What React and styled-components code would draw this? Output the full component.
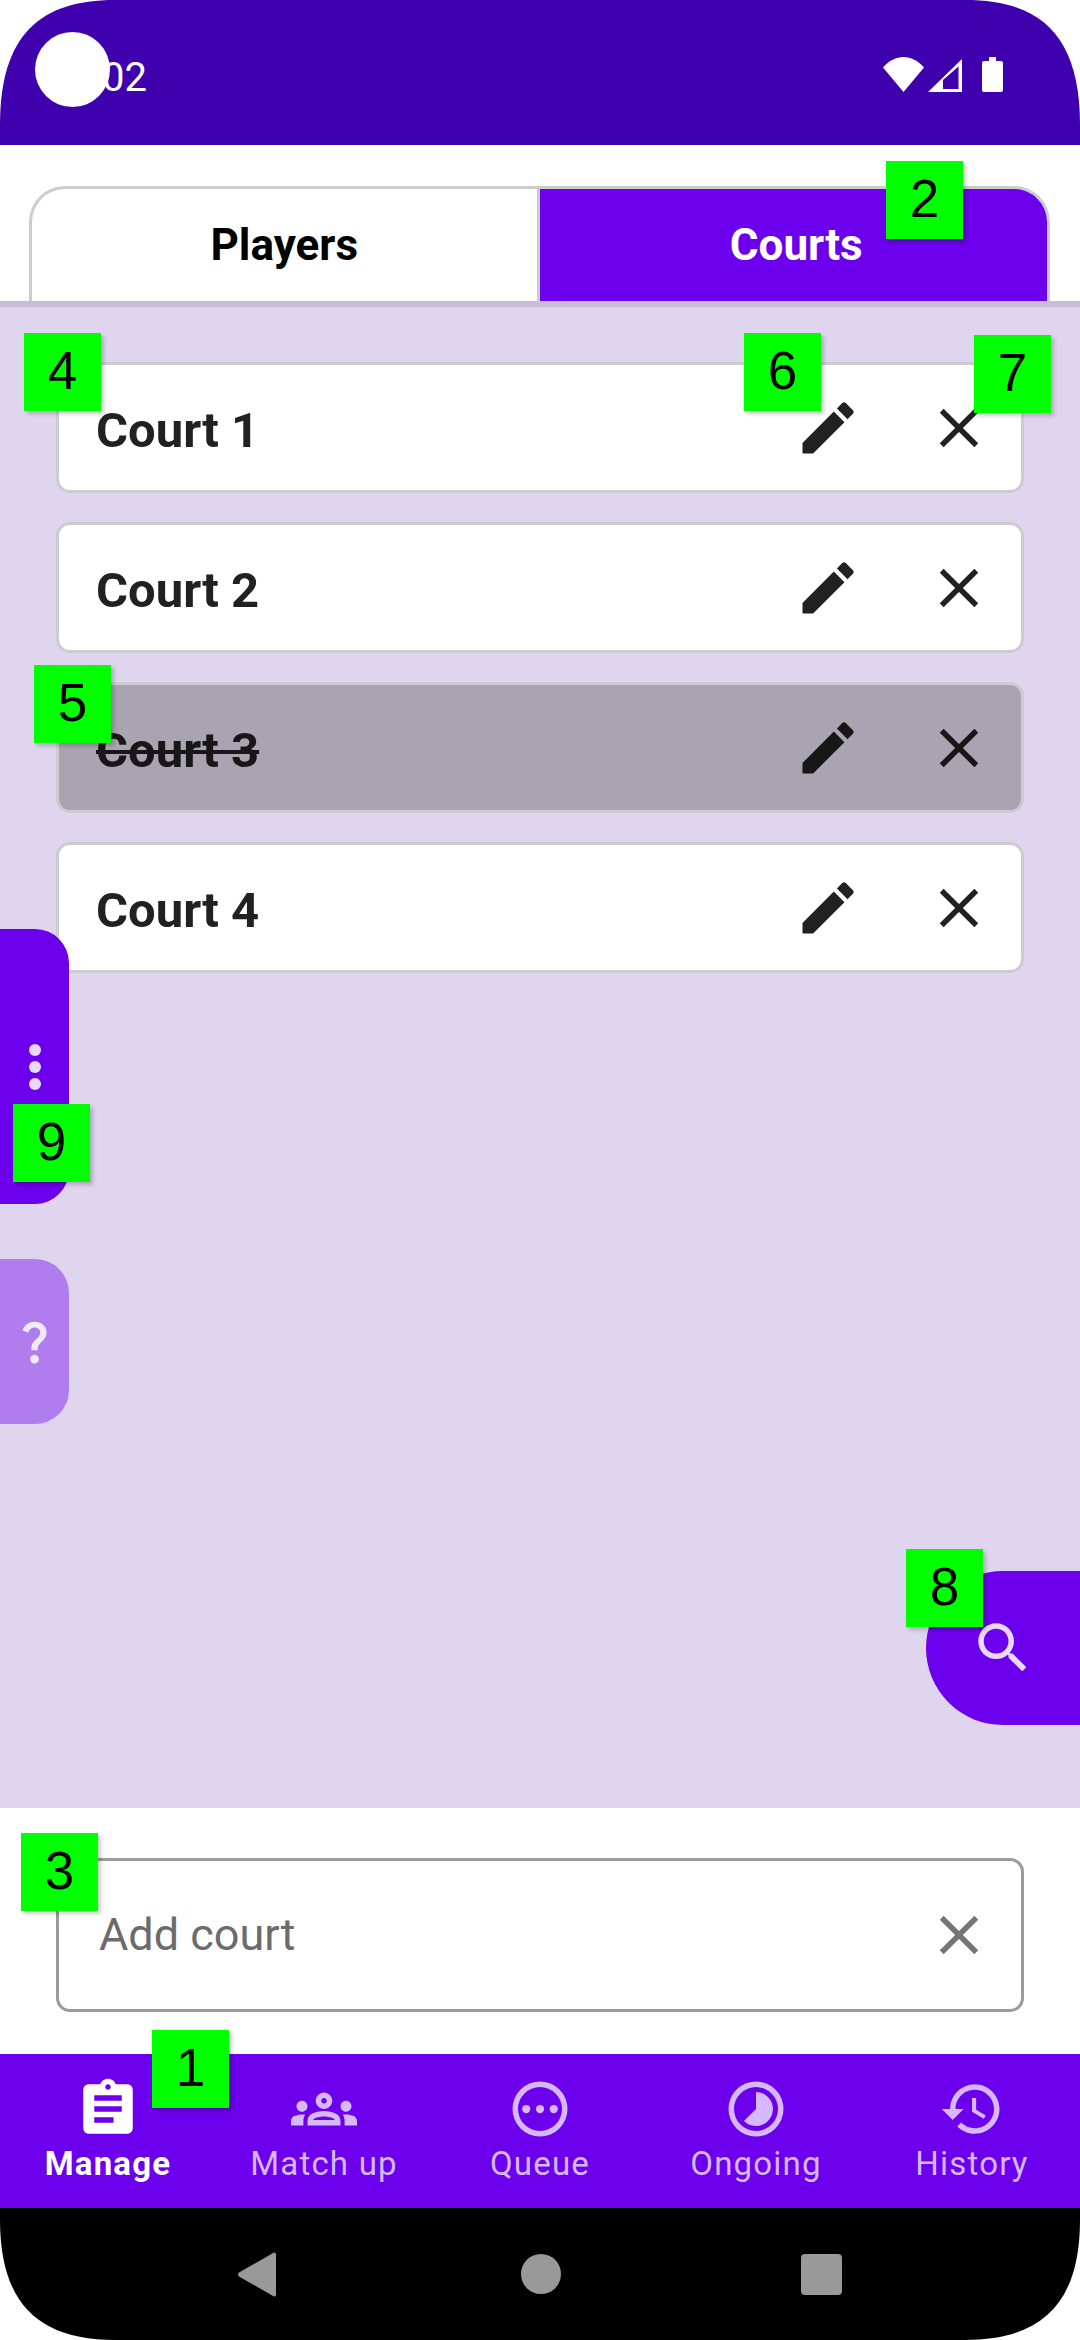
import React from "react";
import styled, { createGlobalStyle } from "styled-components";

const Global = createGlobalStyle`
  html, body { margin: 0; padding: 0; background: #fff; }
  body { font-family: Roboto, "Noto Sans", sans-serif; }
  * { box-sizing: border-box; }
`;

const PURPLE = "#6c00ec";

const Page = styled.div`
  position: relative;
  width: 1080px;
  height: 2340px;
  display: flex;
  flex-direction: column;
  overflow: hidden;
  background: #fff;
`;

const StatusBar = styled.header`
  flex: 0 0 145px;
  display: flex;
  justify-content: space-between;
  align-items: flex-start;
  padding: 57px 77px 0 102px;
  background: #3f00ae;
  clip-path: path("M0 145 V125 C0 35 40 0 115 0 H965 C1040 0 1080 35 1080 125 V145 Z");
`;

const Clock = styled.span`
  font-size: 40px;
  line-height: 41px;
  color: #fff;
`;

const CameraDot = styled.div`
  position: absolute;
  left: 35px;
  top: 32px;
  width: 75px;
  height: 75px;
  border-radius: 50%;
  background: #fff;
`;

const StatusIcons = styled.div`
  display: flex;
  align-items: flex-end;
  height: 35px;
  svg { display: block; fill: #fff; }
  svg:nth-child(2) { margin: 0 20px 0 4px; }
`;

const TabBar = styled.nav`
  flex: 0 0 162px;
  display: flex;
  padding: 41px 30px 0 29px;
  border-bottom: 6px solid #c6bdd6;
`;

const Tab = styled.div`
  flex: 1 1 50%;
  display: flex;
  align-items: center;
  justify-content: center;
  padding-left: ${(p) => (p.$active ? "6px" : 0)};
  font-size: 44px;
  font-weight: 700;
  color: ${(p) => (p.$active ? "#fff" : "#000")};
  background: ${(p) => (p.$active ? PURPLE : "#fff")};
  border: 3px solid #cccccc;
  border-bottom: 0;
  border-left-width: ${(p) => (p.$active ? 0 : "3px")};
  border-radius: ${(p) => (p.$active ? "0 36px 0 0" : "36px 0 0 0")};
`;

const Content = styled.main`
  flex: 1 1 auto;
  display: flex;
  flex-direction: column;
  gap: 29px;
  padding: 55px 56px 0;
  background: #dfd5ee;
`;

const Row = styled.div`
  height: 131px;
  display: flex;
  align-items: center;
  gap: 64px;
  padding: 0 29px 0 37px;
  background: ${(p) => (p.$disabled ? "#aaa3b2" : "#fff")};
  border: 3px solid #cecbd2;
  border-radius: 14px;
`;

const RowName = styled.span`
  flex: 1;
  padding-top: 5px;
  font-size: 49px;
  font-weight: 700;
  color: ${(p) => (p.$disabled ? "#171717" : "#212121")};
  text-decoration: ${(p) => (p.$disabled ? "line-through" : "none")};
`;

const RowIcon = styled.svg`
  display: block;
  flex: none;
  fill: ${(p) => (p.$disabled ? "#171717" : "#212121")};
`;

const AddPanel = styled.section`
  flex: 0 0 246px;
  padding: 50px 56px 0;
  background: #fff;
`;

const AddField = styled.div`
  height: 154px;
  display: flex;
  align-items: center;
  justify-content: space-between;
  padding: 0 29px 0 40px;
  border: 3px solid #9b9b9b;
  border-radius: 14px;
`;

const Placeholder = styled.span`
  padding-bottom: 2px;
  font-size: 45px;
  color: #6b6b6b;
`;

const BottomNav = styled.nav`
  flex: 0 0 154px;
  display: grid;
  grid-template-columns: repeat(5, 1fr);
  background: ${PURPLE};
`;

const NavItem = styled.div`
  display: flex;
  flex-direction: column;
  align-items: center;
  padding-top: 22px;
  color: ${(p) => (p.$active ? "#fff" : "#d6b8ff")};
  svg { display: block; fill: currentColor; }
`;

const NavLabel = styled.span`
  margin-top: 2px;
  font-size: 33px;
  line-height: 40px;
  letter-spacing: 1.2px;
  font-weight: ${(p) => (p.$active ? 700 : 400)};
`;

const SystemNav = styled.footer`
  flex: 0 0 132px;
  position: relative;
  display: flex;
  align-items: center;
  justify-content: center;
  background: #000;
  clip-path: path("M0 0 H1080 V12 C1080 97 1040 132 965 132 H115 C40 132 0 97 0 12 Z");
`;

const SysIcons = styled.div`
  display: flex;
  align-items: center;
  svg { display: block; fill: #999; }
  svg:first-child { margin-right: 245px; }
  svg:last-child { margin-left: 240px; }
`;

const SideTab = styled.div`
  position: absolute;
  left: 0;
  top: ${(p) => p.$top}px;
  width: 69px;
  height: ${(p) => p.$height}px;
  display: flex;
  flex-direction: column;
  align-items: center;
  justify-content: center;
  gap: 5px;
  background: ${(p) => p.$bg};
  border-radius: 0 34px 34px 0;
  svg { display: block; fill: #f1e9fb; }
`;

const Dot = styled.span`
  width: 12px;
  height: 12px;
  border-radius: 50%;
  background: #e8d9ff;
`;

const SearchFab = styled.div`
  position: absolute;
  left: 926px;
  top: 1571px;
  width: 154px;
  height: 154px;
  display: flex;
  align-items: center;
  justify-content: center;
  background: ${PURPLE};
  border-radius: 77px 0 0 77px;
  svg { display: block; fill: #e8d9ff; }
`;

const Marker = styled.div`
  position: absolute;
  left: ${(p) => p.$x}px;
  top: ${(p) => p.$y}px;
  width: 77px;
  height: 78px;
  display: flex;
  align-items: center;
  justify-content: center;
  padding-bottom: 4px;
  background: #00ff00;
  color: #000;
  font-family: "Liberation Sans", Arial, sans-serif;
  font-size: 53px;
  box-shadow: 3px 3px 4px rgba(0, 0, 0, 0.2);
`;

const I = {
  edit: "M3 17.25V21h3.75L17.81 9.94l-3.75-3.75L3 17.25zM20.71 7.04a1 1 0 0 0 0-1.41l-2.34-2.34a1 1 0 0 0-1.41 0l-1.83 1.83 3.75 3.75 1.83-1.83z",
  close: "M19 6.41 17.59 5 12 10.59 6.41 5 5 6.41 10.59 12 5 17.59 6.41 19 12 13.41 17.59 19 19 17.59 13.41 12z",
  search: "M15.5 14h-.79l-.28-.27C15.41 12.59 16 11.11 16 9.5 16 5.91 13.09 3 9.5 3S3 5.91 3 9.5 5.91 16 9.5 16c1.61 0 3.09-.59 4.23-1.57l.27.28v.79l5 4.99L20.49 19l-4.99-5zm-6 0C7.01 14 5 11.99 5 9.5S7.01 5 9.5 5 14 7.01 14 9.5 11.99 14 9.5 14z",
  assignment: "M19 3h-4.18C14.4 1.84 13.3 1 12 1c-1.3 0-2.4.84-2.82 2H5c-1.1 0-2 .9-2 2v14c0 1.1.9 2 2 2h14c1.1 0 2-.9 2-2V5c0-1.1-.9-2-2-2zm-7 0c.55 0 1 .45 1 1s-.45 1-1 1-1-.45-1-1 .45-1 1-1zm2 14H7v-2h7v2zm3-4H7v-2h10v2zm0-4H7V7h10v2z",
  groups: "M4,13c1.1,0,2-0.9,2-2c0-1.1-0.9-2-2-2s-2,0.9-2,2C2,12.1,2.9,13,4,13z M5.13,14.1C4.76,14.04,4.39,14,4,14 c-0.99,0-1.93,0.21-2.78,0.58C0.48,14.9,0,15.62,0,16.43V18l4.5,0v-1.61C4.5,15.56,4.73,14.78,5.13,14.1z M20,13c1.1,0,2-0.9,2-2 c0-1.1-0.9-2-2-2s-2,0.9-2,2C18,12.1,18.9,13,20,13z M24,16.43c0-0.81-0.48-1.53-1.22-1.85C21.93,14.21,20.99,14,20,14 c-0.39,0-0.76,0.04-1.13,0.1c0.4,0.68,0.63,1.46,0.63,2.29V18l4.5,0V16.43z M16.24,13.65c-1.17-0.52-2.61-0.9-4.24-0.9 c-1.63,0-3.07,0.39-4.24,0.9C6.68,14.13,6,15.21,6,16.39V18h12v-1.61C18,15.21,17.32,14.13,16.24,13.65z M8.07,16 c0.09-0.23,0.13-0.39,0.91-0.69c0.97-0.38,1.99-0.56,3.02-0.56s2.05,0.18,3.02,0.56c0.77,0.3,0.81,0.46,0.91,0.69H8.07z M12,8 c0.55,0,1,0.45,1,1s-0.45,1-1,1s-1-0.45-1-1S11.45,8,12,8 M12,6c-1.66,0-3,1.34-3,3c0,1.66,1.34,3,3,3s3-1.34,3-3 C15,7.34,13.66,6,12,6L12,6z",
  ring: "M12 2a10 10 0 1 0 0 20 10 10 0 0 0 0-20zm0 18a8 8 0 1 1 0-16 8 8 0 0 1 0 16z",
  dots: "M7 10.5a1.5 1.5 0 1 0 0 3 1.5 1.5 0 0 0 0-3zm5 0a1.5 1.5 0 1 0 0 3 1.5 1.5 0 0 0 0-3zm5 0a1.5 1.5 0 1 0 0 3 1.5 1.5 0 0 0 0-3z",
  pie: "M12 5.8V12L7.6 16.4A6.2 6.2 0 1 0 12 5.8z",
  history: "M13 3a9 9 0 0 0-9 9H1l3.89 3.89.07.14L9 12H6c0-3.87 3.13-7 7-7s7 3.13 7 7-3.13 7-7 7c-1.93 0-3.68-.79-4.94-2.06l-1.42 1.42C8.27 19.99 10.51 21 13 21c4.97 0 9-4.03 9-9s-4.03-9-9-9zm-1 5v5l4.28 2.54.72-1.21-3.5-2.08V8H12z",
  question: "M11.07 12.85c.77-1.39 2.25-2.21 3.11-3.44.91-1.29.4-3.7-2.18-3.7-1.69 0-2.52 1.28-2.87 2.34L6.54 6.96C7.25 4.83 9.18 3 11.99 3c2.35 0 3.96 1.07 4.78 2.41.7 1.15 1.11 3.3.03 4.9-1.2 1.77-2.35 2.31-2.97 3.45-.25.46-.35.76-.35 2.24h-2.89c-.01-.78-.13-2.05.48-3.15zM14 20c0 1.1-.9 2-2 2s-2-.9-2-2 .9-2 2-2 2 .9 2 2z",
};

const Icon = ({ paths, size = 66, ...rest }) => (
  <svg width={size} height={size} viewBox="0 0 24 24" {...rest}>
    {paths.map((d) => (
      <path key={d} d={d} />
    ))}
  </svg>
);

const courts = [
  { name: "Court 1" },
  { name: "Court 2" },
  { name: "Court 3", disabled: true },
  { name: "Court 4" },
];

const navItems = [
  { label: "Manage", paths: [I.assignment], active: true },
  { label: "Match up", paths: [I.groups] },
  { label: "Queue", paths: [I.ring, I.dots] },
  { label: "Ongoing", paths: [I.ring, I.pie] },
  { label: "History", paths: [I.history] },
];

const markers = [
  { n: 1, x: 152, y: 2030 },
  { n: 2, x: 886, y: 161 },
  { n: 3, x: 21, y: 1833 },
  { n: 4, x: 24, y: 333 },
  { n: 5, x: 34, y: 665 },
  { n: 6, x: 744, y: 333 },
  { n: 7, x: 974, y: 335 },
  { n: 8, x: 906, y: 1549 },
  { n: 9, x: 13, y: 1104 },
];

export default function App() {
  return (
    <Page>
      <Global />
      <StatusBar>
        <Clock>02</Clock>
        <StatusIcons>
          <svg width="41" height="35" viewBox="0 0 41 35">
            <path d="M0 10.5C12-3.5 29-3.5 41 10.5L20.5 35Z" />
          </svg>
          <svg width="34" height="33" viewBox="0 0 34 33">
            <path fillRule="evenodd" d="M0 33 34 0V33ZM15 21V30H30.5V7.5Z" />
          </svg>
          <svg width="21" height="35" viewBox="0 0 21 35">
            <path d="M7 0h7v4h5a2 2 0 0 1 2 2v27a2 2 0 0 1-2 2H2a2 2 0 0 1-2-2V6a2 2 0 0 1 2-2h5z" />
          </svg>
        </StatusIcons>
      </StatusBar>
      <CameraDot />

      <TabBar>
        <Tab>Players</Tab>
        <Tab $active>Courts</Tab>
      </TabBar>

      <Content>
        {courts.map((c) => (
          <Row key={c.name} $disabled={c.disabled}>
            <RowName $disabled={c.disabled}>{c.name}</RowName>
            <RowIcon as={Icon} paths={[I.edit]} size={68} $disabled={c.disabled} />
            <RowIcon as={Icon} paths={[I.close]} size={66} $disabled={c.disabled} />
          </Row>
        ))}
      </Content>

      <AddPanel>
        <AddField>
          <Placeholder>Add court</Placeholder>
          <Icon paths={[I.close]} size={66} fill="#757575" />
        </AddField>
      </AddPanel>

      <BottomNav>
        {navItems.map((n) => (
          <NavItem key={n.label} $active={n.active}>
            <Icon paths={n.paths} size={66} />
            <NavLabel $active={n.active}>{n.label}</NavLabel>
          </NavItem>
        ))}
      </BottomNav>

      <SystemNav>
        <SysIcons>
          <svg width="38" height="45" viewBox="0 0 38 45">
            <path d="M36 0.5a2 2 0 0 1 2 1.5V43a2 2 0 0 1-2 1.5L1 24.5a2.5 2.5 0 0 1 0-4Z" />
          </svg>
          <svg width="40" height="40" viewBox="0 0 40 40">
            <circle cx="20" cy="20" r="20" />
          </svg>
          <svg width="41" height="41" viewBox="0 0 41 41">
            <rect width="41" height="41" rx="4" />
          </svg>
        </SysIcons>
      </SystemNav>

      <SideTab $top={929} $height={275} $bg={PURPLE}>
        <Dot />
        <Dot />
        <Dot />
      </SideTab>
      <SideTab $top={1259} $height={165} $bg="#af7dee">
        <Icon paths={[I.question]} size={53} />
      </SideTab>
      <SearchFab>
        <Icon paths={[I.search]} size={66} />
      </SearchFab>

      {markers.map((m) => (
        <Marker key={m.n} $x={m.x} $y={m.y}>
          {m.n}
        </Marker>
      ))}
    </Page>
  );
}
